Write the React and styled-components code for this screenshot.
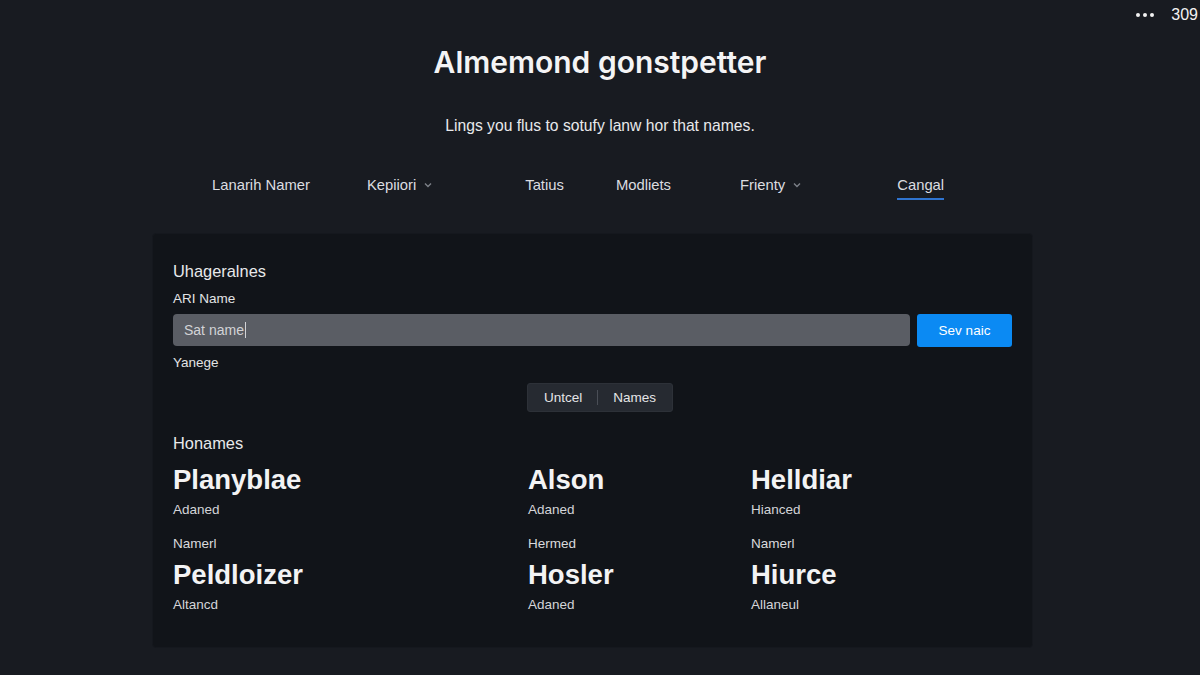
import styled, { createGlobalStyle } from "styled-components";

const GlobalStyle = createGlobalStyle`
  * {
    box-sizing: border-box;
  }

  body {
    margin: 0;
    background: #181b21;
    font-family: "Liberation Sans", Arial, sans-serif;
    color: #e6e7e9;
  }
`;

const tabs = [
  { label: "Lanarih Namer", offset: 212 },
  { label: "Kepiiori", offset: 57, caret: true },
  { label: "Tatius", offset: 92 },
  { label: "Modliets", offset: 52 },
  { label: "Frienty", offset: 69, caret: true },
  { label: "Cangal", offset: 95, active: true },
];

const names = [
  { name: "Planyblae", sub: "Adaned" },
  { name: "Alson", sub: "Adaned" },
  { name: "Helldiar", sub: "Hianced" },
  { label: "Namerl", name: "Peldloizer", sub: "Altancd" },
  { label: "Hermed", name: "Hosler", sub: "Adaned" },
  { label: "Namerl", name: "Hiurce", sub: "Allaneul" },
];

function Caret() {
  return (
    <svg width="10" height="10" viewBox="0 0 10 10">
      <path d="M2 3.5 L5 6.5 L8 3.5" fill="none" stroke="#7c8088" strokeWidth="1.4" />
    </svg>
  );
}

function App() {
  return (
    <Page>
      <GlobalStyle />
      <TopBar>
        <Dots>
          <span />
          <span />
          <span />
        </Dots>
        <Counter>309</Counter>
      </TopBar>

      <Title>Almemond gonstpetter</Title>
      <Subtitle>Lings you flus to sotufy lanw hor that names.</Subtitle>

      <Tabs>
        {tabs.map((t) => (
          <Tab key={t.label} $offset={t.offset} $active={t.active}>
            {t.label}
            {t.caret && <Caret />}
          </Tab>
        ))}
      </Tabs>

      <Panel>
        <SectionTitle>Uhageralnes</SectionTitle>
        <FieldLabel>ARI Name</FieldLabel>
        <InputRow>
          <NameInput>
            Sat name<CaretBar />
          </NameInput>
          <SaveButton>Sev naic</SaveButton>
        </InputRow>
        <FieldLabel $top={7}>Yanege</FieldLabel>

        <SegmentRow>
          <Segmented>
            <Segment>Untcel</Segment>
            <SegDivider />
            <Segment>Names</Segment>
          </Segmented>
        </SegmentRow>

        <SectionTitle $top={20}>Honames</SectionTitle>
        <NameGrid>
          {names.map((n, i) => (
            <NameCard key={i} $second={!!n.label}>
              {n.label && <CardLabel>{n.label}</CardLabel>}
              <BigName>{n.name}</BigName>
              <SubName>{n.sub}</SubName>
            </NameCard>
          ))}
        </NameGrid>
      </Panel>
    </Page>
  );
}

export default App;

const Page = styled.div`
  width: 1200px;
  min-height: 675px;
  overflow: hidden;
  background: #181b21;
`;

const TopBar = styled.div`
  height: 30px;
  padding-right: 2px;
  display: flex;
  justify-content: flex-end;
  align-items: center;
  gap: 17px;
`;

const Dots = styled.div`
  display: flex;
  gap: 3px;

  span {
    width: 4px;
    height: 4px;
    border-radius: 50%;
    background: #f2f2f2;
  }
`;

const Counter = styled.div`
  font-size: 16px;
  color: #f2f2f2;
`;

const Title = styled.h1`
  margin: 14px 0 0;
  text-align: center;
  font-family: Inter, "Liberation Sans", sans-serif;
  font-size: 30px;
  font-weight: 600;
  line-height: 36px;
  color: #f4f4f5;
`;

const Subtitle = styled.p`
  margin: 36px 0 0;
  text-align: center;
  font-size: 15.7px;
  line-height: 20px;
  color: #e8e9eb;
`;

const Tabs = styled.nav`
  margin-top: 40px;
  display: flex;
  align-items: flex-start;
`;

const Tab = styled.div`
  margin-left: ${(p) => p.$offset}px;
  padding-bottom: 4px;
  border-bottom: 2px solid ${(p) => (p.$active ? "#2f74d0" : "transparent")};
  display: flex;
  align-items: center;
  gap: 7px;
  font-size: 14.8px;
  line-height: 18px;
  color: #dcdde0;
`;

const Panel = styled.section`
  width: 881px;
  margin: 33px 0 0 152px;
  padding: 26px 20px 34px;
  background: #111419;
  border: 1px solid #15181e;
  border-radius: 4px;
`;

const SectionTitle = styled.h2`
  margin: ${(p) => p.$top || 0}px 0 0;
  font-size: 16.4px;
  font-weight: 400;
  line-height: 22px;
  color: #e8e9eb;
`;

const FieldLabel = styled.div`
  margin-top: ${(p) => p.$top || 8}px;
  font-size: 13.5px;
  line-height: 18px;
  color: #e2e3e5;
`;

const InputRow = styled.div`
  margin-top: 6px;
  display: flex;
  gap: 7px;
`;

const NameInput = styled.div`
  flex: 1;
  height: 32px;
  padding: 0 11px;
  display: flex;
  align-items: center;
  background: #5a5d64;
  border-radius: 4px;
  font-size: 14px;
  color: #d2d3d6;
`;

const CaretBar = styled.span`
  width: 1px;
  height: 16px;
  margin-left: 1px;
  background: #d2d3d6;
`;

const SaveButton = styled.button`
  width: 95px;
  height: 33px;
  border: none;
  border-radius: 3px;
  background: #0b8af3;
  font-family: "Liberation Sans", Arial, sans-serif;
  font-size: 13.5px;
  color: #ffffff;
`;

const SegmentRow = styled.div`
  margin-top: 11px;
  padding-left: 15px;
  display: flex;
  justify-content: center;
`;

const Segmented = styled.div`
  height: 29px;
  padding: 0 16px;
  display: flex;
  align-items: center;
  gap: 15px;
  background: #262a31;
  border: 1px solid #2d3138;
  border-radius: 3px;
`;

const Segment = styled.span`
  font-size: 13.5px;
  color: #e4e5e7;
`;

const SegDivider = styled.span`
  width: 1px;
  height: 15px;
  background: #4a4e56;
`;

const NameGrid = styled.div`
  margin-top: 10px;
  display: grid;
  grid-template-columns: 355px 223px 1fr;
`;

const NameCard = styled.div`
  display: flex;
  flex-direction: column;
  margin-top: ${(p) => (p.$second ? 18 : 0)}px;
`;

const CardLabel = styled.div`
  font-size: 13.5px;
  line-height: 16px;
  color: #d9dadd;
  margin-bottom: 7px;
`;

const BigName = styled.div`
  font-size: 27.5px;
  font-weight: 700;
  line-height: 32px;
  color: #f3f3f4;
`;

const SubName = styled.div`
  margin-top: 6px;
  font-size: 13.5px;
  line-height: 16px;
  color: #d4d5d8;
`;
